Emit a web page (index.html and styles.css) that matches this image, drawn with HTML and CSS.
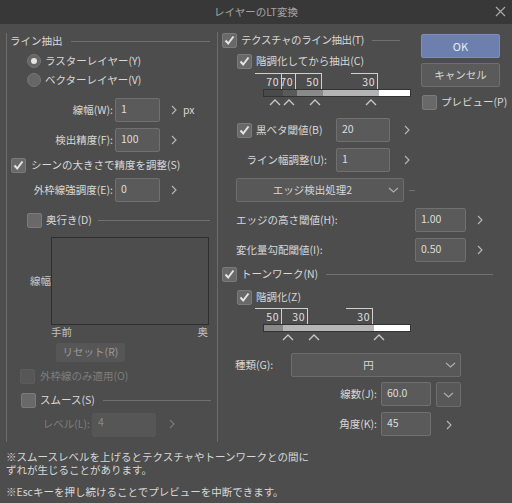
FILE: index.html
```html
<!DOCTYPE html>
<html lang="ja">
<head>
<meta charset="utf-8">
<title>レイヤーのLT変換</title>
<link rel="stylesheet" href="styles.css">
</head>
<body>
<div class="win">
  <div class="titlebar">
    <span class="title">レイヤーのLT変換</span>
    <span class="close"><svg width="11" height="11" viewBox="0 0 11 11"><path d="M1 1L10 10M10 1L1 10" stroke="#a8a8a8" stroke-width="1.2" fill="none"/></svg></span>
  </div>
  <div class="body">
    <div class="main">
      <!-- LEFT GROUP -->
      <div class="left">
        <div class="ghead lhead"><span class="gtitle">ライン抽出</span><span class="gline"></span></div>
        <div class="radio-row r1"><span class="radio on"></span><span>ラスターレイヤー(Y)</span></div>
        <div class="radio-row r2"><span class="radio"></span><span>ベクターレイヤー(V)</span></div>
        <div class="irow l-w m9"><span class="lab">線幅(W):</span><span class="inp w45">1</span><span class="chev"><svg width="6" height="10" viewBox="0 0 6 10"><path d="M1 1L5 5L1 9" stroke="#b8b8b8" stroke-width="1.1" fill="none"/></svg></span><span class="unit">px</span></div>
        <div class="irow l-w m6"><span class="lab">検出精度(F):</span><span class="inp w45">100</span><span class="chev"><svg width="6" height="10" viewBox="0 0 6 10"><path d="M1 1L5 5L1 9" stroke="#b8b8b8" stroke-width="1.1" fill="none"/></svg></span></div>
        <div class="crow scene"><span class="cb checked"><svg width="13" height="13" viewBox="0 0 13 13"><path d="M2.5 6.5L5.2 9.5L10.5 2.5" stroke="#e4e4e4" stroke-width="2" fill="none"/></svg></span><span>シーンの大きさで精度を調整(S)</span></div>
        <div class="irow l-w m5"><span class="lab">外枠線強調度(E):</span><span class="inp w45">0</span><span class="chev"><svg width="6" height="10" viewBox="0 0 6 10"><path d="M1 1L5 5L1 9" stroke="#b8b8b8" stroke-width="1.1" fill="none"/></svg></span></div>
        <div class="crow depth"><span class="cb"></span><span>奥行き(D)</span><span class="gline dline"></span></div>
        <div class="graph-row"><span class="glab">線幅</span><div class="graph"></div></div>
        <div class="axis"><span>手前</span><span>奥</span></div>
        <div class="reset">リセット(R)</div>
        <div class="crow outer dis"><span class="cb dcb"></span><span>外枠線のみ適用(O)</span></div>
        <div class="crow smooth"><span class="cb"></span><span>スムース(S)</span><span class="gline sline"></span></div>
        <div class="irow level dis"><span class="lab lvl">レベル(L):</span><span class="inp dinp">4</span><span class="chev"><svg width="6" height="10" viewBox="0 0 6 10"><path d="M1 1L5 5L1 9" stroke="#7c7c7c" stroke-width="1.1" fill="none"/></svg></span></div>
      </div>

      <!-- RIGHT GROUP -->
      <div class="right">
        <div class="top">
          <div class="tex">
            <div class="ghead rhead"><span class="cb checked"><svg width="13" height="13" viewBox="0 0 13 13"><path d="M2.5 6.5L5.2 9.5L10.5 2.5" stroke="#e4e4e4" stroke-width="2" fill="none"/></svg></span><span class="gtitle">テクスチャのライン抽出(T)</span><span class="gline tline"></span></div>
            <div class="crow sub m5"><span class="cb checked"><svg width="13" height="13" viewBox="0 0 13 13"><path d="M2.5 6.5L5.2 9.5L10.5 2.5" stroke="#e4e4e4" stroke-width="2" fill="none"/></svg></span><span>階調化してから抽出(C)</span></div>
            <div class="slider s1">
              <div class="flags">
                <span class="flag" style="left:0px"><i>70</i></span>
                <span class="flag" style="left:14px"><i>70</i></span>
                <span class="flag" style="left:40px"><i>50</i></span>
                <span class="flag" style="left:96px"><i>30</i></span>
              </div>
              <div class="bar">
                <span class="seg" style="width:19px;background:#4a4a4a"></span>
                <span class="seg" style="width:14px;background:#5a5a5a"></span>
                <span class="seg" style="width:26px;background:#8a8a8a"></span>
                <span class="seg" style="width:56px;background:#b3b3b3"></span>
                <span class="seg grow" style="background:#ffffff"></span>
              </div>
              <div class="carets">
                <span class="caret" style="left:14px"><svg width="12" height="7" viewBox="0 0 12 7"><path d="M1 6L6 1L11 6" stroke="#c8c8c8" stroke-width="1.3" fill="none"/></svg></span>
                <span class="caret" style="left:28px"><svg width="12" height="7" viewBox="0 0 12 7"><path d="M1 6L6 1L11 6" stroke="#c8c8c8" stroke-width="1.3" fill="none"/></svg></span>
                <span class="caret" style="left:54px"><svg width="12" height="7" viewBox="0 0 12 7"><path d="M1 6L6 1L11 6" stroke="#c8c8c8" stroke-width="1.3" fill="none"/></svg></span>
                <span class="caret" style="left:110px"><svg width="12" height="7" viewBox="0 0 12 7"><path d="M1 6L6 1L11 6" stroke="#c8c8c8" stroke-width="1.3" fill="none"/></svg></span>
              </div>
            </div>
            <div class="irow rrow m10"><span class="rlab"><span class="cb checked"><svg width="13" height="13" viewBox="0 0 13 13"><path d="M2.5 6.5L5.2 9.5L10.5 2.5" stroke="#e4e4e4" stroke-width="2" fill="none"/></svg></span><span>黒ベタ閾値(B)</span></span><span class="inp w54">20</span><span class="chev c12"><svg width="6" height="10" viewBox="0 0 6 10"><path d="M1 1L5 5L1 9" stroke="#b8b8b8" stroke-width="1.1" fill="none"/></svg></span></div>
            <div class="irow rrow m6"><span class="rlab ra">ライン幅調整(U):</span><span class="inp w54">1</span><span class="chev c12"><svg width="6" height="10" viewBox="0 0 6 10"><path d="M1 1L5 5L1 9" stroke="#b8b8b8" stroke-width="1.1" fill="none"/></svg></span></div>
            <div class="ddrow"><div class="dd edge"><span class="ddtext">エッジ検出処理2</span><span class="ddchev"><svg width="11" height="6" viewBox="0 0 11 6"><path d="M1 1L5.5 5L10 1" stroke="#b0b0b0" stroke-width="1.1" fill="none"/></svg></span></div><span class="tick"></span></div>
          </div>
          <div class="buttons">
            <div class="btn ok">OK</div>
            <div class="btn cancel">キャンセル</div>
            <div class="crow prev"><span class="cb"></span><span>プレビュー(P)</span></div>
          </div>
        </div>
        <div class="irow erow m6"><span class="elab">エッジの高さ閾値(H):</span><span class="inp w51">1.00</span><span class="chev c9"><svg width="6" height="10" viewBox="0 0 6 10"><path d="M1 1L5 5L1 9" stroke="#b8b8b8" stroke-width="1.1" fill="none"/></svg></span></div>
        <div class="irow erow m6"><span class="elab">変化量勾配閾値(I):</span><span class="inp w51">0.50</span><span class="chev c9"><svg width="6" height="10" viewBox="0 0 6 10"><path d="M1 1L5 5L1 9" stroke="#b8b8b8" stroke-width="1.1" fill="none"/></svg></span></div>
        <div class="ghead thead"><span class="cb checked"><svg width="13" height="13" viewBox="0 0 13 13"><path d="M2.5 6.5L5.2 9.5L10.5 2.5" stroke="#e4e4e4" stroke-width="2" fill="none"/></svg></span><span class="gtitle">トーンワーク(N)</span><span class="gline toneline"></span></div>
        <div class="crow sub m7"><span class="cb checked"><svg width="13" height="13" viewBox="0 0 13 13"><path d="M2.5 6.5L5.2 9.5L10.5 2.5" stroke="#e4e4e4" stroke-width="2" fill="none"/></svg></span><span>階調化(Z)</span></div>
        <div class="slider s2">
          <div class="flags">
            <span class="flag" style="left:0px"><i>50</i></span>
            <span class="flag" style="left:26px"><i>30</i></span>
            <span class="flag" style="left:91px"><i>30</i></span>
          </div>
          <div class="bar">
            <span class="seg" style="width:19px;background:#8a8a8a"></span>
            <span class="seg" style="width:91px;background:#b6b6b6"></span>
            <span class="seg grow" style="background:#ffffff"></span>
          </div>
          <div class="carets">
            <span class="caret" style="left:27px"><svg width="12" height="7" viewBox="0 0 12 7"><path d="M1 6L6 1L11 6" stroke="#c8c8c8" stroke-width="1.3" fill="none"/></svg></span>
            <span class="caret" style="left:53px"><svg width="12" height="7" viewBox="0 0 12 7"><path d="M1 6L6 1L11 6" stroke="#c8c8c8" stroke-width="1.3" fill="none"/></svg></span>
            <span class="caret" style="left:118px"><svg width="12" height="7" viewBox="0 0 12 7"><path d="M1 6L6 1L11 6" stroke="#c8c8c8" stroke-width="1.3" fill="none"/></svg></span>
          </div>
        </div>
        <div class="irow kind m10"><span class="klab">種類(G):</span><div class="dd shape"><span class="ddtext">円</span><span class="ddchev"><svg width="11" height="6" viewBox="0 0 11 6"><path d="M1 1L5.5 5L10 1" stroke="#b0b0b0" stroke-width="1.1" fill="none"/></svg></span></div></div>
        <div class="irow nrow m5"><span class="nlab">線数(J):</span><span class="inp w50">60.0</span><span class="ddbtn"><svg width="11" height="6" viewBox="0 0 11 6"><path d="M1 1L5.5 5L10 1" stroke="#b0b0b0" stroke-width="1.1" fill="none"/></svg></span></div>
        <div class="irow nrow m5"><span class="nlab">角度(K):</span><span class="inp w50">45</span><span class="chev c13"><svg width="6" height="10" viewBox="0 0 6 10"><path d="M1 1L5 5L1 9" stroke="#b8b8b8" stroke-width="1.1" fill="none"/></svg></span></div>
      </div>
    </div>
    <div class="notes">
      <p class="note n1a">※スムースレベルを上げるとテクスチャやトーンワークとの間に</p>
      <p class="note n1b">ずれが生じることがあります。</p>
      <p class="note n2">※Escキーを押し続けることでプレビューを中断できます。</p>
    </div>
  </div>
</div>
</body>
</html>
```

FILE: styles.css
```css
* { box-sizing: border-box; }
html, body { margin: 0; padding: 0; background: #4d4d4d; }
body {
  font-family: "Noto Sans CJK JP", "Noto Sans", "Liberation Sans", sans-serif;
  font-size: 10.5px;
  color: #d8d8d8;
  line-height: 1;
}
.win { width: 512px; height: 503px; background: #4d4d4d; overflow: hidden; }

.titlebar {
  height: 24px; background: #383838; position: relative;
  display: flex; align-items: center; justify-content: center;
}
.title { color: #a4a4a4; font-size: 10.5px; }
.close { position: absolute; right: 6px; top: 6px; width: 11px; height: 11px; display: flex; }

.body { padding-top: 9px; }
.main { display: flex; height: 409px; }

.left { margin-left: 6px; width: 206px; border-left: 1px solid #6c6c6c; }
.right { margin-left: 5px; width: 290px; border-left: 1px solid #6c6c6c; margin-top: -1px; }

.ghead { height: 16px; display: flex; align-items: center; white-space: nowrap; }
.gline { height: 1px; background: #707070; flex: 1; }
.lhead .gtitle { margin-left: 3px; }
.lhead .gline { margin-left: 8px; margin-right: 2px; }

.radio-row { display: flex; align-items: center; height: 18px; margin-left: 20px; }
.r1 { margin-top: 3px; }
.r2 { margin-top: 1px; }
.radio {
  width: 14px; height: 14px; border-radius: 50%;
  background: #666666; border: 1px solid #757575; margin-right: 4px;
  display: flex; align-items: center; justify-content: center;
}
.radio.on::after { content: ""; width: 6px; height: 6px; border-radius: 50%; background: #e6e6e6; }

.irow { display: flex; align-items: center; height: 24px; }
.m5 { margin-top: 5px; }
.m6 { margin-top: 6px; }
.m7 { margin-top: 7px; }
.m9 { margin-top: 9px; }
.m10 { margin-top: 10px; }

.lab { width: 106px; text-align: right; margin-right: 2px; white-space: nowrap; }
.inp {
  height: 24px; background: #5a5a5a; border: 1px solid #707070; border-radius: 2px;
  padding: 5px 0 0 5px; color: #dedede; align-self: stretch;
}
.w45 { width: 45px; }
.w50 { width: 50px; }
.w51 { width: 51px; }
.w54 { width: 54px; }
.chev { width: 8px; height: 10px; margin-left: 10px; display: flex; justify-content: center; }
.c12 { margin-left: 13px; }
.c9 { margin-left: 10px; }
.c13 { margin-left: 14px; }
.unit { margin-left: 5px; }

.crow { display: flex; align-items: center; height: 16px; white-space: nowrap; }
.cb {
  width: 15px; height: 15px; flex: none; background: #696969; border: 1px solid #7a7a7a;
  border-radius: 2px; margin-right: 4px; display: flex; align-items: center; justify-content: center;
}
.scene { margin-top: 5px; margin-left: 4px; }
.scene .cb { margin-right: 5px; }
.depth { margin-top: 10px; margin-left: 20px; }
.dline { margin-left: 6px; margin-right: 2px; }

.graph-row { display: flex; align-items: center; margin-top: 9px; }
.glab { width: 44px; text-align: right; color: #c8c8c8; }
.graph { width: 158px; height: 88px; border: 1px solid #2e2e2e; }
.axis {
  display: flex; justify-content: space-between; width: 158px; margin-left: 44px;
  height: 12px; margin-top: 1px; color: #c0c0c0; align-items: center; padding-right: 1px;
}
.reset {
  margin-top: 5px; margin-left: 49px; width: 69px; height: 19px; background: #565656;
  border-radius: 2px; color: #9a9a9a; display: flex; align-items: center; justify-content: center;
}
.outer { margin-top: 6px; margin-left: 13px; }
.dis { color: #7e7e7e; }
.dcb { background: #575757; border-color: #5c5c5c; margin-right: 5px; }
.smooth { margin-top: 8px; margin-left: 14px; }
.sline { margin-left: 8px; margin-right: 1px; }
.level { margin-top: 5px; height: 22px; }
.lvl { width: 83px; margin-right: 2px; text-align: right; }
.dinp { width: 64px; background: #565656; border-color: #565656; color: #8a8a8a; padding-top: 3px; }
.level .chev { margin-left: 12px; }

/* right */
.top { display: flex; }
.tex { width: 197px; }
.rhead { margin-left: 4px; }
.rhead .cb { margin-right: 4px; }
.rhead .gtitle { letter-spacing: -0.4px; }
.tline { margin-left: 8px; margin-right: 15px; }
.sub { margin-left: 19px; }

.slider { position: relative; margin-left: 37px; width: 156px; }
.s1 { margin-top: 4px; }
.s2 { margin-top: 3px; }
.flags { position: relative; height: 16px; }
.flag {
  position: absolute; top: 0; width: 27px; height: 16px;
  border-top: 1px solid #d0d0d0; border-right: 1px solid #d0d0d0;
  text-align: right; padding-right: 2px; padding-top: 3px; font-size: 10.5px; color: #e0e0e0;
}
.flag i { font-style: normal; letter-spacing: 0.5px; }
.bar { display: flex; height: 8px; margin-left: 8px; border: 1px solid #333; }
.seg { height: 100%; flex: none; }
.seg.grow { flex: 1; }
.carets { position: relative; height: 11px; }
.caret { position: absolute; top: 2px; width: 12px; height: 7px; display: flex; }

.rrow { height: 24px; }
.rlab { width: 109px; display: flex; align-items: center; margin-right: 9px; padding-left: 19px; white-space: nowrap; }
.rlab.ra { justify-content: flex-end; padding-left: 0; }
.ddrow { display: flex; align-items: center; margin-top: 6px; }
.dd {
  height: 24px; background: #585858; border: 1px solid #6c6c6c; border-radius: 2px;
  display: flex; align-items: center; position: relative;
}
.edge { margin-left: 18px; width: 169px; }
.ddtext { flex: 1; text-align: center; }
.ddchev { width: 11px; height: 6px; display: flex; margin-right: 4px; }
.tick { width: 6px; height: 1px; background: #707070; margin-left: 5px; }

.buttons { width: 79px; margin-left: 6px; margin-top: 2px; }
.btn {
  height: 24px; border-radius: 2px; display: flex; align-items: center; justify-content: center;
}
.ok { background: #6c7fae; border: 1px solid #7d8fbc; color: #e8ecf6; font-size: 11px; }
.cancel { margin-top: 5px; background: #5a5a5a; border: 1px solid #6e6e6e; }
.prev { margin-top: 8px; margin-left: 1px; height: 15px; }
.prev .cb { margin-right: 4px; }

.erow .elab { width: 197px; padding-left: 18px; white-space: nowrap; }
.thead { margin-top: 4px; margin-left: 4px; }
.thead .cb { margin-right: 4px; }
.toneline { margin-left: 8px; margin-right: 14px; }

.klab { width: 73px; padding-left: 17px; }
.shape { width: 170px; }
.nrow { height: 25px; }
.nlab { width: 159px; text-align: right; margin-right: 4px; }
.ddbtn {
  width: 25px; height: 25px; margin-left: 5px; background: #585858; border: 1px solid #6c6c6c;
  border-radius: 2px; display: flex; align-items: center; justify-content: center;
}

.notes { margin-left: 6px; padding-top: 8px; }
.notes .note { margin: 0; height: 13px; line-height: 13px; white-space: nowrap; }
.notes .n2 { margin-top: 9px; }
```
